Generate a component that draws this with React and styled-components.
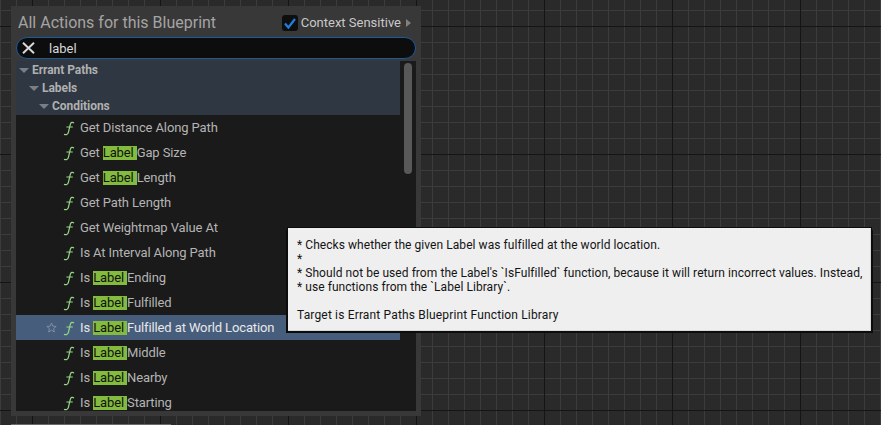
import React from 'react'
import styled, { createGlobalStyle } from 'styled-components'

const Global = createGlobalStyle`
html, body {
  margin: 0;
  padding: 0;
  background: #292929;
}
`

const Canvas = styled.div`
position: relative;
width: 881px;
height: 425px;
overflow: hidden;
font-family: Roboto, "Liberation Sans", sans-serif;
background-color: #2a2a2a;
background-image:
  linear-gradient(to right, #151515 1px, transparent 1px),
  linear-gradient(to bottom, #151515 1px, transparent 1px),
  linear-gradient(to right, #3c3c3c 1px, transparent 1px),
  linear-gradient(to bottom, #3c3c3c 1px, transparent 1px);
background-size: 128px 128px, 128px 128px, 16px 16px, 16px 16px;
background-position: 32px 0, 0 26px, 0 0, 0 10px;
`

const Panel = styled.div`
position: absolute;
left: 11px;
top: 6px;
width: 400px;
height: 405px;
padding: 0 5px 5px;
background: #383838;
display: flex;
flex-direction: column;
`

const Header = styled.div`
height: 31px;
display: flex;
align-items: center;
justify-content: space-between;
padding: 2px 5px 0 2px;
box-sizing: border-box;
`

const Title = styled.div`
color: #a4a4a4;
font-size: 16px;
`

const Sensitive = styled.div`
display: flex;
align-items: center;
color: #c8c8c8;
font-size: 13px;
`

const Check = styled.div`
width: 16px;
height: 16px;
border-radius: 3px;
background: #0e0e0e;
margin-right: 3px;
display: flex;
align-items: center;
justify-content: center;
`

const Caret = styled.div`
width: 0;
height: 0;
margin-left: 5px;
border-top: 4px solid transparent;
border-bottom: 4px solid transparent;
border-left: 5px solid #808080;
`

const Search = styled.div`
height: 22px;
flex: none;
border: 1px solid #1a5a9e;
border-radius: 12px;
background: #0d0d0d;
display: flex;
align-items: center;
box-sizing: border-box;
color: #d8d8d8;
font-size: 13px;
`

const Clear = styled.svg`
width: 13px;
height: 12px;
margin: 0 14px 0 5px;
flex: none;
`

const Body = styled.div`
margin-top: 2px;
flex: 1;
min-height: 0;
display: flex;
background: #1a1a1a;
overflow: hidden;
`

const List = styled.div`
width: 384px;
flex: none;
`

const Heading = styled.div`
height: 18px;
display: flex;
align-items: center;
background: #2f3742;
color: #b0b0b0;
font-size: 12px;
font-weight: 700;
letter-spacing: -0.05px;
padding-left: ${props => props.indent}px;
`

const Arrow = styled.div`
width: 0;
height: 0;
margin: 1px 3px 0 0;
border-left: 5px solid transparent;
border-right: 5px solid transparent;
border-top: 5px solid #7a7f86;
`

const Row = styled.div`
height: 25px;
flex: none;
display: flex;
align-items: center;
background: ${props => props.selected ? '#475d7c' : 'transparent'};
color: ${props => props.selected ? '#e8e8e8' : '#b4b4b4'};
font-size: 13px;
letter-spacing: -0.12px;
white-space: pre;
padding-left: ${props => props.selected ? '30px' : '47px'};
`

const Star = styled.svg`
width: 11px;
height: 11px;
margin-right: 6px;
flex: none;
`

const Func = styled.svg`
width: 13px;
height: 16px;
margin-right: 4px;
flex: none;
`

const Mark = styled.span`
background: #83bb3f;
color: #10140c;
height: 14px;
line-height: 14px;
`

const Track = styled.div`
flex: 1;
padding: 2px 4px;
`

const Thumb = styled.div`
height: 111px;
border-radius: 4px;
background: #585858;
`

const Tip = styled.div`
position: absolute;
left: 288px;
top: 228px;
width: 583px;
height: 103px;
box-sizing: border-box;
padding: 10px 9px 0 9px;
background: #efefef;
border-right: 1px solid #d8d8d8;
border-bottom: 1px solid #d8d8d8;
box-shadow: 0 0 0 1px #0c0c0c, 2px 2px 0 0 #0c0c0c, -2px 2px 0 0 #0c0c0c;
color: #141414;
font-size: 12px;
line-height: 14px;
letter-spacing: 0.06px;
white-space: pre;
`

const TipTarget = styled.div`
margin-top: 14px;
letter-spacing: 0.16px;
`

const NodeEdge = styled.div`
position: absolute;
left: 11px;
top: 424px;
width: 160px;
height: 1px;
background: #6a6a6a;
`

function FuncIcon() {
  return (
    <Func viewBox="0 0 13 16">
      <path d="M11 3C9.4 1.7 7.9 2.2 7.3 4.4L5.4 12.4C4.9 14.6 3 15.2 1 14.2M3.4 7H9.8" fill="none" stroke="#96d884" strokeWidth="1.2" />
    </Func>
  )
}

const rows = [
  ['Get Distance Along Path'],
  ['Get ', 'Label ', 'Gap Size'],
  ['Get ', 'Label ', 'Length'],
  ['Get Path Length'],
  ['Get Weightmap Value At'],
  ['Is At Interval Along Path'],
  ['Is ', 'Label ', 'Ending'],
  ['Is ', 'Label ', 'Fulfilled'],
  ['Is ', 'Label ', 'Fulfilled at World Location'],
  ['Is ', 'Label ', 'Middle'],
  ['Is ', 'Label ', 'Nearby'],
  ['Is ', 'Label ', 'Starting'],
]

function App() {
  return (
    <Canvas>
      <Global />
      <Panel>
        <Header>
          <Title>All Actions for this Blueprint</Title>
          <Sensitive>
            <Check>
              <svg width="14" height="14" viewBox="0 0 14 14">
                <path d="M2 7.5L5.4 11.5L12 3" fill="none" stroke="#1f7fe0" strokeWidth="2.2" />
              </svg>
            </Check>
            Context Sensitive
            <Caret />
          </Sensitive>
        </Header>
        <Search>
          <Clear viewBox="0 0 13 12">
            <path d="M1 0.8L12 11.2M12 0.8L1 11.2" stroke="#d8d8d8" strokeWidth="2" />
          </Clear>
          label
        </Search>
        <Body>
          <List>
            <Heading indent={3}><Arrow />Errant Paths</Heading>
            <Heading indent={13}><Arrow />Labels</Heading>
            <Heading indent={23}><Arrow />Conditions</Heading>
            {rows.map((r, i) => (
              <Row key={i} selected={i === 8}>
                {i === 8 && (
                  <Star viewBox="0 0 11 11">
                    <path d="M5.5 1L6.8 4.2L10.2 4.4L7.6 6.6L8.4 10L5.5 8.2L2.6 10L3.4 6.6L0.8 4.4L4.2 4.2Z" fill="none" stroke="#7d8ea6" strokeWidth="1" />
                  </Star>
                )}
                <FuncIcon />
                {r.length === 1 ? r[0] : <>{r[0]}<Mark>{r[1]}</Mark>{r[2]}</>}
              </Row>
            ))}
          </List>
          <Track><Thumb /></Track>
        </Body>
      </Panel>
      <Tip>
        {`* Checks whether the given Label was fulfilled at the world location.
*
* Should not be used from the Label's \`IsFulfilled\` function, because it will return incorrect values. Instead,
* use functions from the \`Label Library\`.`}
        <TipTarget>Target is Errant Paths Blueprint Function Library</TipTarget>
      </Tip>
      <NodeEdge />
    </Canvas>
  )
}

export default App
